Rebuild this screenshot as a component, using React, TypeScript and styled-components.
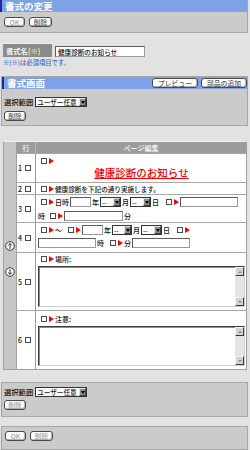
import React from "react";
import styled, { createGlobalStyle } from "styled-components";

const Global = createGlobalStyle`
  html, body { margin: 0; padding: 0; background: #e2e2e2; }
  body {
    font-family: "Noto Sans CJK JP", "Noto Sans", sans-serif;
    font-size: 7.3px;
    font-weight: 500;
    color: #111;
    width: 250px;
    overflow: hidden;
  }
  * { box-sizing: border-box; }
`;

const Page = styled.div`
  width: 250px;
  height: 450px;
  overflow: hidden;
  display: flex;
  flex-direction: column;
`;

const Panel = styled.section<{ $mt?: number; $pb?: number }>`
  background: #cbcbcb;
  border: 1px solid #a6a6a6;
  margin: ${(p) => p.$mt ?? 0}px 2px 0 1px;
  padding-bottom: ${(p) => p.$pb ?? 0}px;
  flex: none;
`;

const TopPanel = styled(Panel)`
  margin: 0 2px 0 0;
  border-width: 0 1px 1px 0;
`;

const Header = styled.div`
  display: flex;
  align-items: center;
  justify-content: space-between;
  height: 12px;
  background: #7ea2e6;
  border-left: 2px solid #1e2a9a;
  padding-left: 3px;
`;

const HeaderTitle = styled.h2`
  margin: 0;
  font-size: 9.5px;
  font-weight: bold;
  color: #fff;
  line-height: 12px;
`;

const HeaderTools = styled.div`
  display: flex;
  gap: 3px;
`;

const Btn = styled.button<{ $w: number; $dim?: boolean }>`
  width: ${(p) => p.$w}px;
  height: 10px;
  padding: 0;
  margin: 0;
  background: #fff;
  border: 1px solid #4a4a4a;
  border-radius: 3px;
  box-shadow: inset -1px -1px 0 #b4b4b4;
  font-family: inherit;
  font-weight: 500;
  font-size: 6.8px;
  line-height: 8px;
  color: ${(p) => (p.$dim ? "#a0a0a0" : "#555")};
  display: inline-flex;
  align-items: center;
  justify-content: center;
  flex: none;
`;

const ButtonRow = styled.div<{ $pt: number; $pb?: number; $pl: number }>`
  display: flex;
  gap: 4px;
  padding: ${(p) => p.$pt}px 0 ${(p) => p.$pb ?? 0}px ${(p) => p.$pl}px;
`;

const FieldRow = styled.div`
  display: flex;
  height: 14px;
  margin: 10px 0 0 3px;
  flex: none;
`;

const FieldLabel = styled.label`
  width: 49px;
  background: #8b8b8b;
  color: #fff;
  font-size: 7.3px;
  display: flex;
  align-items: center;
  padding-left: 3px;
  border-top: 1px solid #efefef;
`;

const Req = styled.span`
  color: #ffff70;
`;

const FieldCell = styled.div`
  display: flex;
  align-items: flex-end;
  padding-left: 3px;
`;

const TextBox = styled.input<{ $w: number; $h?: number }>`
  width: ${(p) => p.$w}px;
  height: ${(p) => p.$h ?? 10}px;
  margin: 0;
  padding: 0 2px;
  background: #fff;
  border: 1px solid #5a5a5a;
  border-right-color: #9a9a9a;
  border-bottom-color: #9a9a9a;
  font-family: inherit;
  font-weight: 500;
  font-size: 6.6px;
  color: #111;
  outline: none;
  flex: none;
`;

const Note = styled.p`
  margin: 2px 0 0 3px;
  font-size: 6.3px;
  line-height: 8px;
  color: #3a6bd6;
  flex: none;
`;

const SelectRow = styled.div<{ $pt: number }>`
  display: flex;
  align-items: center;
  gap: 2px;
  padding: ${(p) => p.$pt}px 0 0 2px;
  line-height: 10px;
  font-size: 7.3px;
`;

const Select = styled.span<{ $w: number }>`
  display: inline-flex;
  align-items: center;
  justify-content: space-between;
  width: ${(p) => p.$w}px;
  height: 10px;
  background: #fff;
  border: 1px solid #333;
  padding-left: 1px;
  font-size: 6.6px;
  line-height: 8px;
  color: #222;
  flex: none;
`;

const SelectArrow = styled.span`
  width: 7px;
  height: 8px;
  background: #8e8e8e;
  border: 1px solid;
  border-color: #e4e4e4 #404040 #404040 #e4e4e4;
  display: flex;
  align-items: center;
  justify-content: center;
  &::after {
    content: "";
    border-top: 3px solid #000;
    border-left: 2px solid transparent;
    border-right: 2px solid transparent;
  }
`;

const TableWrap = styled.div`
  display: flex;
  margin: 15px 3px 0 3px;
  border: 1px solid #a0a0a0;
  border-top-color: #f2f2f2;
  background: #fff;
  flex: none;
`;

const Strip = styled.div`
  width: 13px;
  flex: none;
  background: #c6c6c6;
  border-right: 1px solid #a0a0a0;
  display: flex;
  flex-direction: column;
  align-items: center;
  justify-content: center;
  gap: 16px;
  padding-top: 7px;
`;

const Grid = styled.div`
  flex: 1;
  display: flex;
  flex-direction: column;
`;

const Row = styled.div<{ $h: number; $head?: boolean }>`
  display: flex;
  height: ${(p) => p.$h}px;
  background: ${(p) => (p.$head ? "#9c9c9c" : "#fff")};
  color: ${(p) => (p.$head ? "#fff" : "#111")};
  border-bottom: 1px solid #a8a8a8;
  &:last-child {
    border-bottom: none;
  }
`;

const NumCell = styled.div<{ $head?: boolean }>`
  width: 19px;
  flex: none;
  border-right: 1px solid ${(p) => (p.$head ? "#b8b8b8" : "#9a9a9a")};
  display: flex;
  align-items: center;
  justify-content: ${(p) => (p.$head ? "center" : "flex-start")};
  padding-left: ${(p) => (p.$head ? 0 : 1)}px;
  gap: 3px;
  font-size: 7px;
`;

const BodyCell = styled.div<{ $pt?: number; $center?: boolean }>`
  flex: 1;
  min-width: 0;
  display: flex;
  flex-direction: column;
  justify-content: ${(p) => (p.$center ? "center" : "flex-start")};
  padding: ${(p) => p.$pt ?? 0}px 1px 0 2px;
`;

const HeadText = styled.div`
  flex: 1;
  display: flex;
  align-items: center;
  justify-content: center;
  font-size: 7px;
`;

const Line = styled.div<{ $mt?: number }>`
  display: flex;
  align-items: center;
  gap: 1px;
  height: 10px;
  margin-top: ${(p) => p.$mt ?? 0}px;
  font-size: 7px;
  line-height: 10px;
  white-space: nowrap;
`;

const Check = styled.span<{ $ml?: number }>`
  display: inline-block;
  flex: none;
  width: 6px;
  height: 6px;
  background: #fff;
  border: 1px solid #4a4a4a;
  margin-left: ${(p) => p.$ml ?? 0}px;
`;

const Mark = styled.span`
  flex: none;
  width: 0;
  height: 0;
  margin-left: 1px;
  border-left: 5px solid #ff0000;
  border-top: 3px solid transparent;
  border-bottom: 3px solid transparent;
`;

const Title = styled.div`
  height: 14px;
  line-height: 13px;
  text-align: center;
  font-size: 10.5px;
  color: #ff0000;
  text-decoration: underline;
  text-underline-offset: 1px;
`;

const Plain = styled.span<{ $fs?: number }>`
  font-size: ${(p) => p.$fs ?? 7}px;
`;

const Area = styled.div<{ $h: number }>`
  display: flex;
  justify-content: flex-end;
  height: ${(p) => p.$h}px;
  margin-top: 2px;
  background: #fff;
  border: 1px solid #3c3c3c;
  border-right-color: #cfcfcf;
  border-bottom-color: #cfcfcf;
  box-shadow: inset 1px 1px 0 #8e8e8e;
`;

const ScrollBar = styled.div`
  width: 9px;
  display: flex;
  flex-direction: column;
  justify-content: space-between;
  background: #e4e4e4;
`;

const ScrollBtn = styled.span<{ $down?: boolean }>`
  height: 9px;
  background: #d2d2d2;
  border: 1px solid;
  border-color: #f6f6f6 #3a3a3a #3a3a3a #f6f6f6;
  display: flex;
  align-items: center;
  justify-content: center;
  &::after {
    content: "";
    border-left: 2px solid transparent;
    border-right: 2px solid transparent;
    ${(p) =>
      p.$down
        ? "border-top: 2px solid #8a8a8a;"
        : "border-bottom: 2px solid #8a8a8a;"}
  }
`;

const MoveIcon = ({ down }: { down?: boolean }) => (
  <svg width="10" height="10" viewBox="0 0 10 10" aria-hidden="true">
    <circle cx="5" cy="5" r="4.3" fill="#fafafa" stroke="#2a2a2a" strokeWidth="0.9" />
    {down ? (
      <path d="M5 2.3V7.4M3.1 5.5L5 7.4L6.9 5.5" fill="none" stroke="#222" strokeWidth="0.9" />
    ) : (
      <path d="M5 7.7V2.6M3.1 4.5L5 2.6L6.9 4.5" fill="none" stroke="#222" strokeWidth="0.9" />
    )}
  </svg>
);

const TextAreaBox = ({ h }: { h: number }) => (
  <Area $h={h}>
    <ScrollBar>
      <ScrollBtn />
      <ScrollBtn $down />
    </ScrollBar>
  </Area>
);

const DateSelect = ({ w }: { w: number }) => (
  <Select $w={w}>
    <span>--</span>
    <SelectArrow />
  </Select>
);

const Num = ({ n }: { n: number }) => (
  <NumCell>
    <span>{n}</span>
    <Check />
  </NumCell>
);

export default function App() {
  return (
    <>
      <Global />
      <Page>
        <TopPanel>
          <Header>
            <HeaderTitle>書式の変更</HeaderTitle>
          </Header>
          <ButtonRow $pt={5} $pb={5} $pl={4}>
            <Btn $w={21} $dim>OK</Btn>
            <Btn $w={23}>削除</Btn>
          </ButtonRow>
        </TopPanel>

        <FieldRow>
          <FieldLabel>
            書式名<Req>(※)</Req>
          </FieldLabel>
          <FieldCell>
            <TextBox $w={90} $h={11} readOnly value="健康診断のお知らせ" />
          </FieldCell>
        </FieldRow>
        <Note>※(※)は必須項目です。</Note>

        <Panel $mt={9} $pb={4}>
          <Header>
            <HeaderTitle>書式画面</HeaderTitle>
            <HeaderTools>
              <Btn $w={46}>プレビュー</Btn>
              <Btn $w={46}>部品の追加</Btn>
            </HeaderTools>
          </Header>
          <SelectRow $pt={8}>
            <span>選択範囲</span>
            <Select $w={52}>
              <span>ユーザー任意</span>
              <SelectArrow />
            </Select>
          </SelectRow>
          <ButtonRow $pt={4} $pl={2}>
            <Btn $w={22}>削除</Btn>
          </ButtonRow>
        </Panel>

        <TableWrap>
          <Strip>
            <MoveIcon />
            <MoveIcon down />
          </Strip>
          <Grid>
            <Row $h={12} $head>
              <NumCell $head>行</NumCell>
              <HeadText>ページ編集</HeadText>
            </Row>

            <Row $h={29}>
              <Num n={1} />
              <BodyCell $pt={2}>
                <Line>
                  <Check $ml={3} />
                  <Mark />
                </Line>
                <Title>健康診断のお知らせ</Title>
              </BodyCell>
            </Row>

            <Row $h={12}>
              <Num n={2} />
              <BodyCell $center>
                <Line>
                  <Check $ml={3} />
                  <Mark />
                  <Plain $fs={6.6}>健康診断を下記の通り実施します。</Plain>
                </Line>
              </BodyCell>
            </Row>

            <Row $h={28}>
              <Num n={3} />
              <BodyCell $pt={2}>
                <Line>
                  <Check $ml={3} />
                  <Mark />
                  <Plain>日時</Plain>
                  <TextBox $w={21} readOnly value="" />
                  <Plain>年</Plain>
                  <DateSelect w={21} />
                  <Plain>月</Plain>
                  <DateSelect w={21} />
                  <Plain>日</Plain>
                  <Check $ml={6} />
                  <Mark />
                  <TextBox $w={58} readOnly value="" />
                </Line>
                <Line $mt={4}>
                  <Plain>時</Plain>
                  <Check $ml={4} />
                  <Mark />
                  <TextBox $w={59} readOnly value="" />
                  <Plain>分</Plain>
                </Line>
              </BodyCell>
            </Row>

            <Row $h={30}>
              <Num n={4} />
              <BodyCell $pt={2}>
                <Line>
                  <Check $ml={3} />
                  <Mark />
                  <Plain>～</Plain>
                  <Check $ml={5} />
                  <Mark />
                  <TextBox $w={21} readOnly value="" />
                  <Plain>年</Plain>
                  <DateSelect w={20} />
                  <Plain>月</Plain>
                  <DateSelect w={21} />
                  <Plain>日</Plain>
                  <Check $ml={6} />
                  <Mark />
                </Line>
                <Line $mt={3}>
                  <TextBox $w={58} readOnly value="" />
                  <Plain>時</Plain>
                  <Check $ml={5} />
                  <Mark />
                  <Plain>分</Plain>
                  <TextBox $w={58} readOnly value="" />
                </Line>
              </BodyCell>
            </Row>

            <Row $h={58}>
              <Num n={5} />
              <BodyCell $pt={1}>
                <Line>
                  <Check $ml={3} />
                  <Mark />
                  <Plain>場所:</Plain>
                </Line>
                <TextAreaBox h={41} />
              </BodyCell>
            </Row>

            <Row $h={58}>
              <Num n={6} />
              <BodyCell $pt={3}>
                <Line>
                  <Check $ml={3} />
                  <Mark />
                  <Plain>注意:</Plain>
                </Line>
                <TextAreaBox h={40} />
              </BodyCell>
            </Row>
          </Grid>
        </TableWrap>

        <Panel $mt={12} $pb={6}>
          <SelectRow $pt={4}>
            <span>選択範囲</span>
            <Select $w={52}>
              <span>ユーザー任意</span>
              <SelectArrow />
            </Select>
          </SelectRow>
          <ButtonRow $pt={3} $pl={2}>
            <Btn $w={22} $dim>削除</Btn>
          </ButtonRow>
        </Panel>

        <Panel $mt={9} $pb={8}>
          <ButtonRow $pt={4} $pl={3}>
            <Btn $w={21} $dim>OK</Btn>
            <Btn $w={23} $dim>削除</Btn>
          </ButtonRow>
        </Panel>
      </Page>
    </>
  );
}
